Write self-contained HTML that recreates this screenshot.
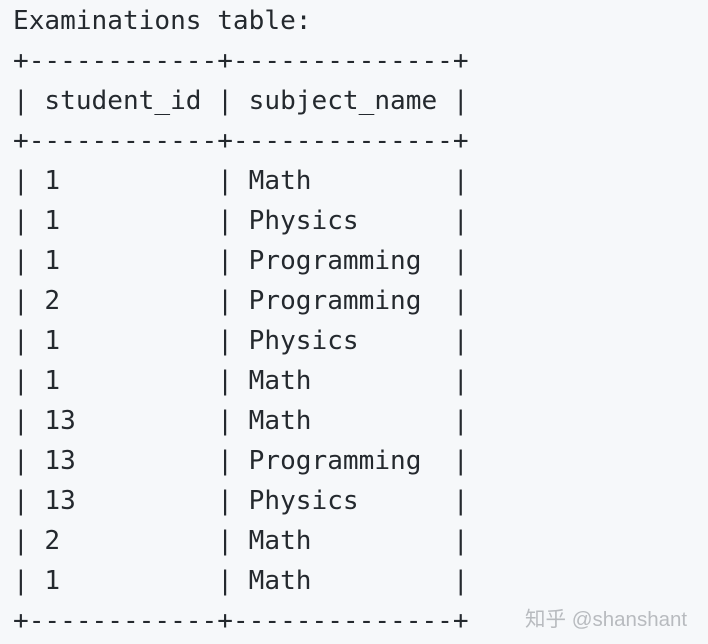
<!DOCTYPE html>
<html><head><style>
html,body{margin:0;padding:0;background:#f6f8fa;width:708px;height:644px;overflow:hidden}
pre{margin:0;position:absolute;left:13px;top:1px;font-family:"DejaVu Sans Mono","Liberation Mono",monospace;font-size:26.1px;line-height:40px;color:#24292e}
.wm{position:absolute;left:525px;top:602px;font-family:"Liberation Sans","Noto Sans CJK SC",sans-serif;font-size:20.5px;color:#b8bbbf}
</style></head><body>
<pre>Examinations table:
+------------+--------------+
| student_id | subject_name |
+------------+--------------+
| 1          | Math         |
| 1          | Physics      |
| 1          | Programming  |
| 2          | Programming  |
| 1          | Physics      |
| 1          | Math         |
| 13         | Math         |
| 13         | Programming  |
| 13         | Physics      |
| 2          | Math         |
| 1          | Math         |
+------------+--------------+</pre>
<div class="wm">知乎 @shanshant</div>
</body></html>
